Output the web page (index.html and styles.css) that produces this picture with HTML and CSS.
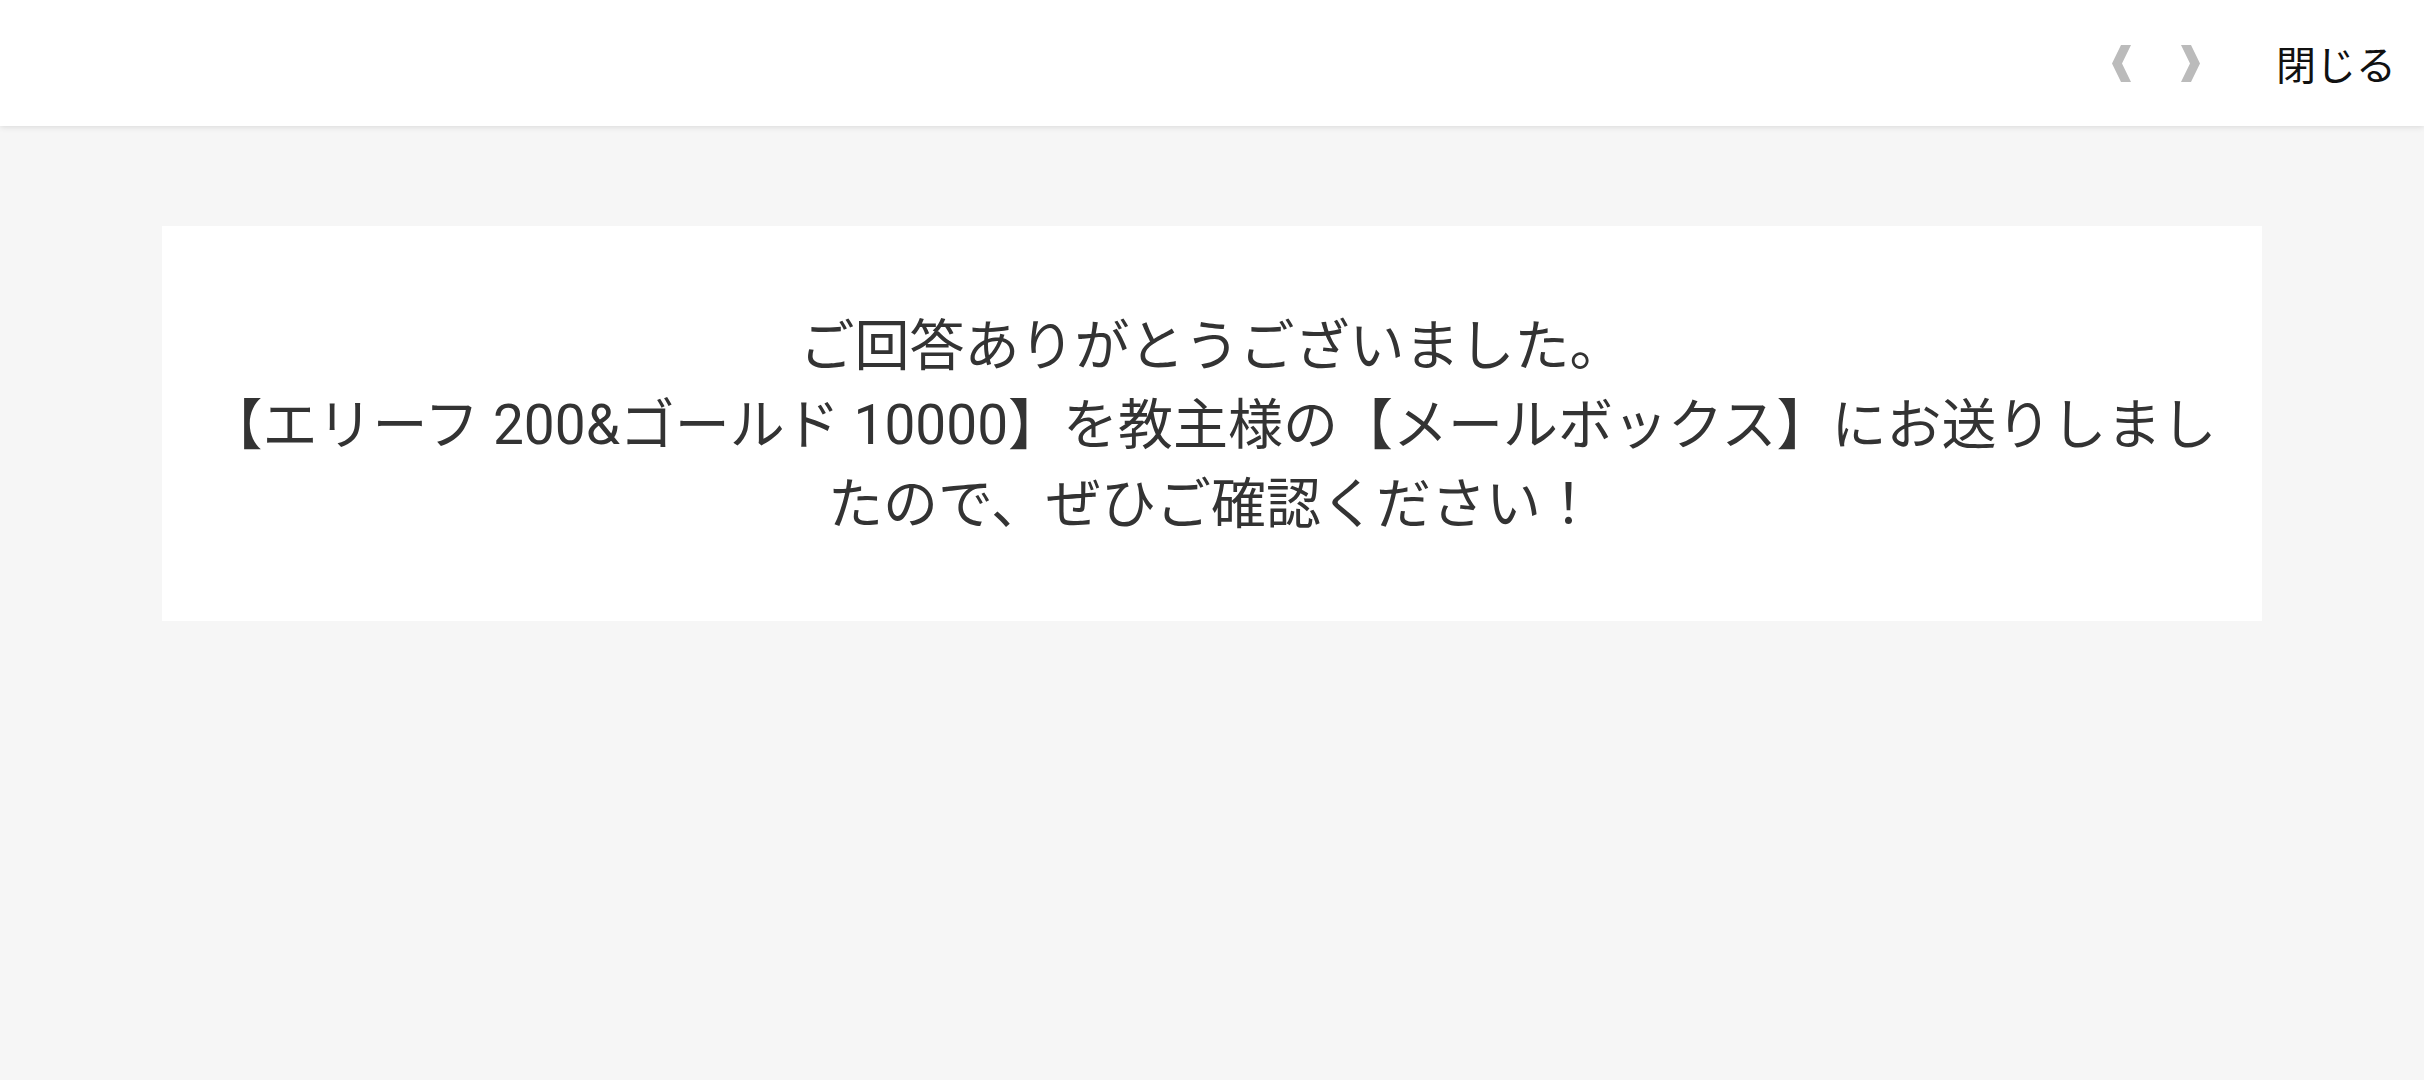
FILE: index.html
```html
<!DOCTYPE html>
<html lang="ja">
<head>
    <meta charset="UTF-8">
    <meta name="viewport" content="width=device-width, initial-scale=1.0">
    <title>アンケート</title>
    <link rel="stylesheet" href="styles.css">
</head>
<body>

<header class="topbar">
    <div class="pager">
        <span class="arrow">
            <svg width="19" height="37" viewBox="0 0 19 37"><polygon points="9,0 19,0 10,18.5 19,37 9,37 0,18.5" fill="#bbbbbb"/></svg>
        </span>
        <span class="arrow">
            <svg width="19" height="37" viewBox="0 0 19 37"><polygon points="0,0 10,0 19,18.5 10,37 0,37 9,18.5" fill="#bbbbbb"/></svg>
        </span>
    </div>
    <div class="close">閉じる</div>
</header>

<main class="content">
    <div class="card">
        <p class="message">ご回答ありがとうございました。<br>【エリーフ 200&amp;ゴールド 10000】を教主様の【メールボックス】にお送りしましたので、ぜひご確認ください！</p>
    </div>
</main>

</body>
</html>
```

FILE: styles.css
```css
body {
    margin: 0;
    background-color: #f6f6f6;
    font-family: Roboto, "Noto Sans CJK JP", sans-serif;
    color: #333;
}
.topbar {
    height: 126px;
    background-color: #fff;
    box-shadow: 0 1px 6px rgba(0, 0, 0, 0.12);
    display: flex;
    align-items: center;
    justify-content: flex-end;
    padding-right: 28px;
    box-sizing: border-box;
}
.pager {
    display: flex;
    gap: 50px;
    margin-right: 76px;
}
.arrow {
    display: flex;
}
.close {
    font-size: 40px;
    color: #111;
    font-family: "Noto Sans CJK JP", sans-serif;
}
.content {
    padding: 100px 162px;
}
.card {
    background-color: #fff;
    padding: 81px 38px 77px;
}
.message {
    margin: 0;
    font-size: 55px;
    line-height: 79px;
    text-align: center;
}
```
